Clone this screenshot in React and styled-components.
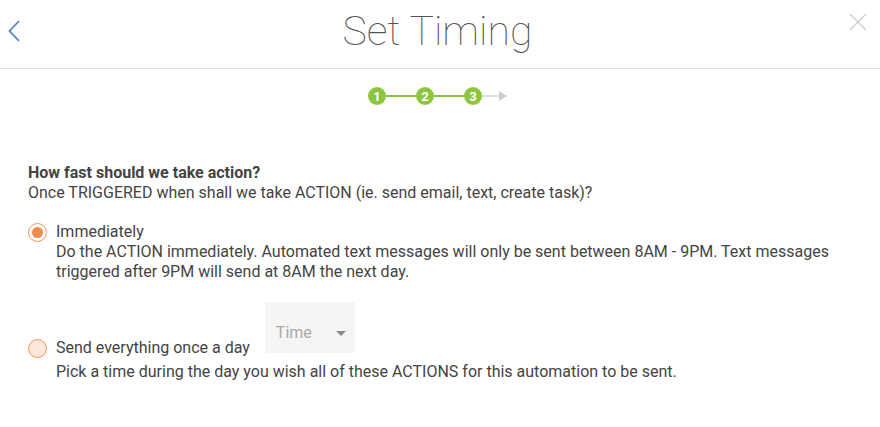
import styled, { createGlobalStyle } from 'styled-components';

const GlobalStyle = createGlobalStyle`
  html, body {
    margin: 0;
    padding: 0;
    background: #fff;
    font-family: Roboto, "Liberation Sans", sans-serif;
    color: #444;
    -webkit-font-smoothing: antialiased;
  }
`;

const steps = [1, 2, 3];

function App() {
  return (
    <Page>
      <GlobalStyle />
      <Header>
        <IconButton aria-label="back">
          <svg width="12" height="22" viewBox="0 0 12 22">
            <path d="M11 1 L1.5 11 L11 21" fill="none" stroke="#4a86c8" strokeWidth="1.8" />
          </svg>
        </IconButton>
        <Title>Set Timing</Title>
        <IconButton aria-label="close">
          <svg width="18" height="18" viewBox="0 0 18 18">
            <path d="M1 1 L17 17 M17 1 L1 17" fill="none" stroke="#d0d0d0" strokeWidth="1.6" />
          </svg>
        </IconButton>
      </Header>

      <Stepper>
        {steps.map((n, i) => (
          <StepGroup key={n}>
            <StepDot>{n}</StepDot>
            {i < steps.length - 1 ? <StepLine /> : <StepTail />}
          </StepGroup>
        ))}
      </Stepper>

      <Content>
        <Question>How fast should we take action?</Question>
        <Text>Once TRIGGERED when shall we take ACTION (ie. send email, text, create task)?</Text>

        <Option $gap={19}>
          <OptionRow>
            <Radio $checked />
            <Label>Immediately</Label>
          </OptionRow>
          <Description>
            Do the ACTION immediately. Automated text messages will only be sent between 8AM - 9PM. Text messages triggered after 9PM will send at 8AM the next day.
          </Description>
        </Option>

        <Option $gap={20}>
          <OptionRow $bottom>
            <Radio />
            <Label>Send everything once a day</Label>
            <Select>
              <span>Time</span>
              <Caret />
            </Select>
          </OptionRow>
          <Description $top={4}>
            Pick a time during the day you wish all of these ACTIONS for this automation to be sent.
          </Description>
        </Option>
      </Content>
    </Page>
  );
}

export default App;

const Page = styled.div`
  width: 880px;
  min-height: 427px;
`;

const Header = styled.div`
  height: 69px;
  border-bottom: 1px solid #e2e2e2;
  display: grid;
  grid-template-columns: 60px 1fr 60px;
  align-items: center;
  padding: 0 11px 0 6px;
  box-sizing: border-box;

  > button:first-child {
    justify-self: start;
    margin-top: -7px;
  }

  > button:last-child {
    justify-self: end;
    margin-top: -24px;
  }
`;

const IconButton = styled.button`
  border: 0;
  background: none;
  padding: 2px;
  display: flex;
  cursor: pointer;
`;

const Title = styled.h1`
  margin: 0;
  text-align: center;
  font-size: 41px;
  font-weight: 100;
  color: #555;
  margin-top: -6px;
`;

const Stepper = styled.div`
  display: flex;
  justify-content: center;
  align-items: center;
  margin-top: 18px;
  padding-right: 10px;
`;

const StepGroup = styled.div`
  display: flex;
  align-items: center;
`;

const StepDot = styled.div`
  width: 18px;
  height: 18px;
  border-radius: 50%;
  background: #8cc63f;
  color: #fff;
  font-size: 13px;
  font-weight: 700;
  display: flex;
  align-items: center;
  justify-content: center;
  line-height: 1;
`;

const StepLine = styled.div`
  width: 30px;
  height: 2px;
  background: #8cc63f;
`;

const StepTail = styled.div`
  width: 20px;
  height: 2px;
  background: #ddd;
  position: relative;

  &::after {
    content: '';
    position: absolute;
    right: -5px;
    top: -4px;
    border-left: 8px solid #ccc;
    border-top: 5px solid transparent;
    border-bottom: 5px solid transparent;
  }
`;

const Content = styled.div`
  padding: 58px 28px 0 28px;
  font-size: 16px;
  line-height: 20px;
`;

const Question = styled.div`
  font-weight: 700;
  color: #444;
`;

const Text = styled.div`
  color: #444;
`;

const Option = styled.div`
  margin-top: ${p => (p.$gap ?? 20)}px;
`;

const OptionRow = styled.div`
  display: flex;
  align-items: ${p => (p.$bottom ? 'flex-end' : 'center')};
  gap: 9px;
`;

const Radio = styled.span`
  width: 19px;
  height: 19px;
  box-sizing: border-box;
  border-radius: 50%;
  border: 1.5px solid #f2945c;
  background: ${p => (p.$checked ? '#fff' : '#fde6dc')};
  display: flex;
  align-items: center;
  justify-content: center;
  flex-shrink: 0;
  align-self: ${p => (p.$checked ? 'center' : 'flex-end')};

  &::after {
    content: '';
    display: ${p => (p.$checked ? 'block' : 'none')};
    width: 11px;
    height: 11px;
    border-radius: 50%;
    background: #f08c50;
  }
`;

const Label = styled.span`
  color: #444;
`;

const Select = styled.div`
  width: 90px;
  height: 51px;
  background: #f5f5f5;
  margin-left: 6px;
  margin-bottom: 5px;
  display: flex;
  align-items: center;
  justify-content: space-between;
  padding: 11px 9px 0 11px;
  box-sizing: border-box;
  color: #aaa;
  font-size: 16px;
`;

const Caret = styled.span`
  width: 0;
  height: 0;
  border-left: 5px solid transparent;
  border-right: 5px solid transparent;
  border-top: 5px solid #888;
`;

const Description = styled.div`
  padding-left: 28px;
  margin-top: ${p => (p.$top ?? 0)}px;
  color: #444;
`;
